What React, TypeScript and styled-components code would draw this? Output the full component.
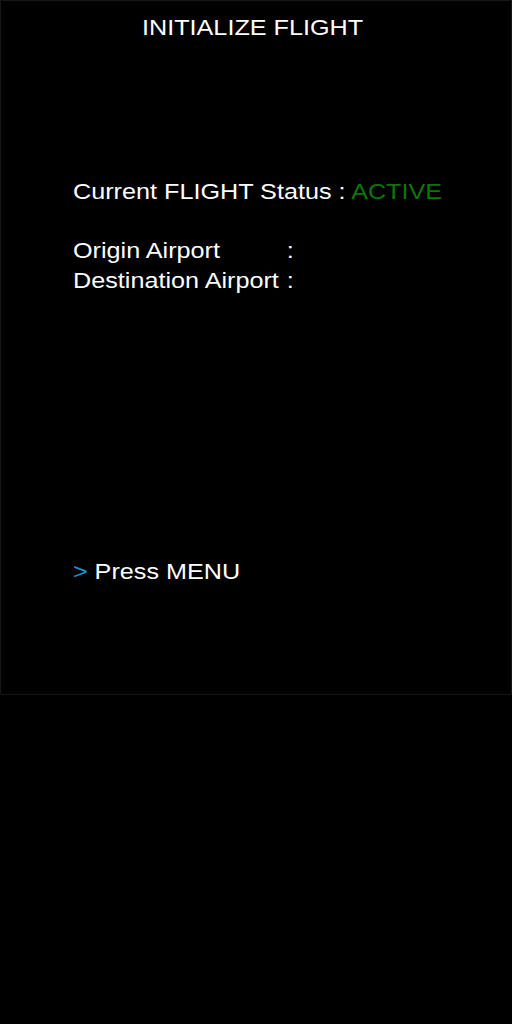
import React from "react";
import styled, { createGlobalStyle } from "styled-components";

const Global = createGlobalStyle`
  html, body {
    margin: 0;
    padding: 0;
    background: #000;
  }
  body {
    font-family: "Liberation Sans", Arial, sans-serif;
    color: #fff;
  }
`;

const Panel = styled.div`
  box-sizing: border-box;
  width: 512px;
  height: 695px;
  border: 1px solid #161616;
  background: #000;
  padding: 12px 0 0 72px;
  display: flex;
  flex-direction: column;
  align-items: flex-start;
`;

const Title = styled.div`
  align-self: stretch;
  margin-left: -78px;
  display: flex;
  justify-content: center;
`;

const TitleText = styled.span`
  display: inline-block;
  font-size: 22px;
  line-height: 30px;
  color: #fff;
  transform: scaleX(1.145);
  transform-origin: center;
`;

const Line = styled.div<{ $top?: number }>`
  font-size: 22px;
  line-height: 30px;
  margin-top: ${(p) => p.$top ?? 0}px;
  white-space: pre;
  transform: scaleX(1.145);
  transform-origin: left center;
`;

const Status = styled.span`
  color: #0b760b;
`;

const Fields = styled.div`
  display: grid;
  grid-template-columns: max-content max-content;
  column-gap: 7px;
  font-size: 22px;
  line-height: 30px;
  margin-top: 29px;
  transform: scaleX(1.145);
  transform-origin: left center;
`;

const Prompt = styled.span`
  color: #1a93d3;
  margin-right: 6px;
`;

export default function App() {
  return (
    <>
      <Global />
      <Panel>
        <Title>
          <TitleText>INITIALIZE FLIGHT</TitleText>
        </Title>
        <Line $top={134}>
          Current FLIGHT Status : <Status>ACTIVE</Status>
        </Line>
        <Fields>
          <span>Origin Airport</span>
          <span>:</span>
          <span>Destination Airport</span>
          <span>:</span>
        </Fields>
        <Line $top={261}>
          <Prompt>&gt;</Prompt>Press MENU
        </Line>
      </Panel>
    </>
  );
}
